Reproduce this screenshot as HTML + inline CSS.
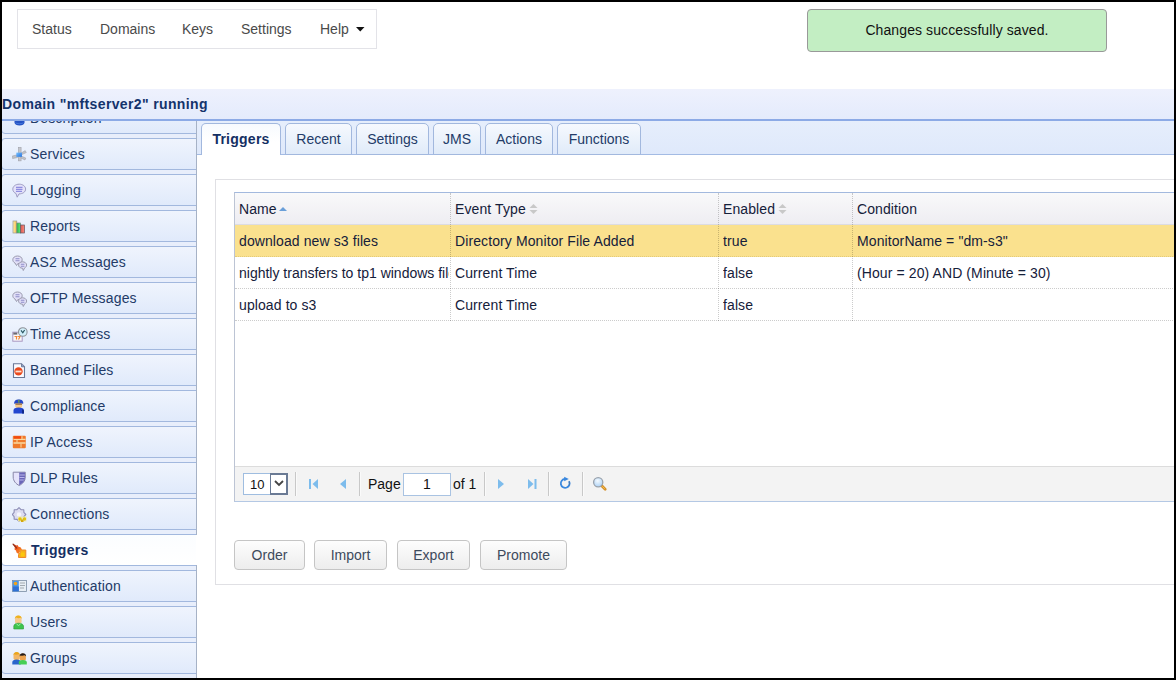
<!DOCTYPE html>
<html><head><meta charset="utf-8">
<style>
*{box-sizing:border-box;margin:0;padding:0}
html,body{width:1176px;height:680px;overflow:hidden;background:#fff}
body{position:relative;font-family:"Liberation Sans",sans-serif;font-size:14px;color:#222}
.abs{position:absolute}
#frame{position:absolute;left:0;top:0;width:1176px;height:680px;border:2px solid #000;pointer-events:none;z-index:100}
/* top nav */
#nav{left:17px;top:9px;width:360px;height:40px;border:1px solid #e3e3e8;background:#fff}
#nav span{position:absolute;top:11px;color:#4a4a4a;line-height:16px}
#toast{left:807px;top:9px;width:300px;height:43px;border:1px solid #999;border-radius:4px;background:#c3eec3;color:#111;text-align:center;line-height:40px;letter-spacing:0.1px}
/* header band */
#band{left:2px;top:89px;width:1172px;height:32px;background:linear-gradient(#eef1fd,#e4ebfc);border-bottom:2px solid #8caae6}
#band b{position:absolute;left:0px;top:7px;font-size:14px;color:#14336b;line-height:16px;letter-spacing:0.36px}
/* sidebar */
#side{left:2px;top:121px;width:195px;height:557px;overflow:hidden;background:#e8eefb}
.si{position:absolute;left:-1px;width:201px;height:32px;border:1px solid #a2b8de;border-radius:4px;background:linear-gradient(#eff4fd,#e0eafb);color:#233b68}
.si span{position:absolute;left:28px;top:7px;line-height:16px;letter-spacing:0.15px}
.si svg{position:absolute;left:10px;top:8px}
.si.act{background:linear-gradient(#fbfdff,#fff);}
.si.act span{font-weight:bold;color:#142f63;letter-spacing:0.3px;left:29px}
/* main */
#main{left:196px;top:121px;width:980px;height:557px;border-left:1px solid #a6b2c6;background:#fff}
#tabbar{left:0;top:0;width:980px;height:34px;background:linear-gradient(#e6eefc,#dfe9fb);border-bottom:1px solid #a3bbe4}
.tab{position:absolute;top:2px;height:32px;border:1px solid #a2b8de;border-radius:5px 5px 0 0;background:linear-gradient(#f6f9fe,#e0ebf9);color:#233b68;text-align:center;line-height:30px}
.tab.act{background:linear-gradient(#f7fafe,#fff 60%);border-bottom:none;letter-spacing:0.25px;font-weight:bold;color:#142f63}
#box{left:215px;top:179px;width:970px;height:406px;border:1px solid #e0e0e4}
#grid{left:234px;top:192px;width:950px;height:310px;border:1px solid #b4c8e4;border-top-color:#a3b9de;border-left-color:#bcc4d4;background:#fff}
.hdr{position:absolute;left:0;top:0;width:100%;height:32px;background:linear-gradient(#f9f9fa,#eeedf2);border-bottom:1px solid #dcdce2}
.cell{position:absolute;line-height:16px;color:#15203a;letter-spacing:0.1px;white-space:nowrap;overflow:hidden}
.vline{position:absolute;top:0;width:0;border-left:1px dotted rgba(0,0,0,0.2)}
.hline{position:absolute;left:0;width:100%;height:0;border-top:1px dotted rgba(0,0,0,0.2)}
#pager{left:0;top:273px;width:100%;height:35px;background:#f3f3f3;border-top:1px solid #dcdcdc}
.sep{position:absolute;top:5px;width:2px;height:24px;background:#c8c8c8;border-right:1px solid #fafafa}
.btn{position:absolute;top:540px;height:30px;border:1px solid #c5c5c5;border-radius:4px;background:linear-gradient(#fdfdfd,#ededed);color:#3d4a5c;text-align:center;line-height:28px}
</style></head><body>
<div id="frame"></div>

<div id="nav" class="abs">
  <span style="left:14px">Status</span>
  <span style="left:82px">Domains</span>
  <span style="left:164px">Keys</span>
  <span style="left:223px">Settings</span>
  <span style="left:302px">Help</span>
  <svg class="abs" style="left:338px;top:17px" width="9" height="5"><path d="M0 0H8.5L4.25 4.5Z" fill="#111"/></svg>
</div>

<div id="toast" class="abs">Changes successfully saved.</div>

<div id="band" class="abs"><b>Domain "mftserver2" running</b></div>

<div id="side" class="abs">
  <div class="si" style="top:-19px"><svg width="16" height="16"><path d="M2.5 2V11.5C2.5 13.5 4.8 14.5 7.5 14.5C10.2 14.5 12.5 13.5 12.5 11.5V2Z" fill="#2553c4"/><path d="M3.5 11.8C4.5 13 10.5 13 11.5 11.8" stroke="#4a7ee0" stroke-width="0.8" fill="none"/></svg><span>Description</span></div>
  <div class="si" style="top:17px"><svg width="16" height="16"><rect x="6.3" y="0.3" width="2.8" height="13.6" fill="#c4c6cc" stroke="#9a9ca4" stroke-width="0.5"/><path d="M0.3 9L5.5 7.8V10.5L0.6 11.6Z" fill="#bfc1c7" stroke="#9a9ca4" stroke-width="0.5"/><path d="M9.5 5.8L13.2 3.6L14.3 5.6L9.8 7.6Z" fill="#bfc1c7" stroke="#9a9ca4" stroke-width="0.5"/><path d="M9.2 9L13.8 11L13 13L8.8 11Z" fill="#bfc1c7" stroke="#9a9ca4" stroke-width="0.5"/><defs><linearGradient id="sg" x1="0" y1="0" x2="1" y2="1"><stop offset="0" stop-color="#7cc4ff"/><stop offset="1" stop-color="#1f70e0"/></linearGradient></defs><rect x="4.3" y="5.6" width="5.6" height="4.2" fill="url(#sg)"/></svg><span>Services</span></div>
  <div class="si" style="top:53px"><svg width="16" height="16"><path d="M7.2 1.2C3.6 1.2 0.8 3.3 0.8 6.2C0.8 8.2 2.2 9.8 4 10.5L5.2 14.2L7 10.9C10.8 10.9 13.6 8.9 13.6 6.1C13.6 3.3 10.8 1.2 7.2 1.2Z" fill="#e4e2fa" stroke="#9d9cc2" stroke-width="1"/><path d="M4 4.3H10.5M4 6.3H10.5M4 8.3H10" stroke="#8f8de0" stroke-width="1.2"/></svg><span>Logging</span></div>
  <div class="si" style="top:89px"><svg width="16" height="16"><defs><linearGradient id="rg" x1="0" y1="0" x2="1" y2="0"><stop offset="0" stop-color="#fff0b0"/><stop offset="1" stop-color="#f2b840"/></linearGradient><linearGradient id="gg" x1="0" y1="0" x2="1" y2="0"><stop offset="0" stop-color="#2fb04a"/><stop offset="1" stop-color="#5ef07a"/></linearGradient><linearGradient id="rdg" x1="0" y1="0" x2="1" y2="0"><stop offset="0" stop-color="#d85a50"/><stop offset="1" stop-color="#ff8a80"/></linearGradient></defs><rect x="1" y="2" width="3.8" height="12" fill="url(#rg)" stroke="#9a9a90" stroke-width="0.7"/><rect x="4.8" y="4" width="3.8" height="10" fill="url(#gg)" stroke="#7a8a80" stroke-width="0.7"/><rect x="8.6" y="6" width="4" height="8" fill="url(#rdg)" stroke="#5a5a66" stroke-width="0.7"/></svg><span>Reports</span></div>
  <div class="si" style="top:125px"><svg width="16" height="16"><path d="M5.5 1C2.8 1 0.8 2.6 0.8 4.8C0.8 6.2 1.7 7.4 3 8L4.5 10.5L5.8 8.6C8.4 8.5 10.2 6.9 10.2 4.8C10.2 2.6 8.2 1 5.5 1Z" fill="#e2e0f8" stroke="#9a9aae" stroke-width="1"/><path d="M3.5 3.8H7.5M3.5 5.8H7.5" stroke="#8e8cc8" stroke-width="1.1"/><path d="M10.5 6.8C8.2 6.8 6.6 8.2 6.6 10C6.6 11.8 8.2 13.2 10.5 13.2L11.3 15.5L12.5 13C13.8 12.4 14.6 11.3 14.6 10C14.6 8.2 12.8 6.8 10.5 6.8Z" fill="#e2e0f8" stroke="#9a9aae" stroke-width="1"/><path d="M8.8 9.3H12.4M8.8 11.2H12.4" stroke="#8e8cc8" stroke-width="1.1"/></svg><span>AS2 Messages</span></div>
  <div class="si" style="top:161px"><svg width="16" height="16"><path d="M5.5 1C2.8 1 0.8 2.6 0.8 4.8C0.8 6.2 1.7 7.4 3 8L4.5 10.5L5.8 8.6C8.4 8.5 10.2 6.9 10.2 4.8C10.2 2.6 8.2 1 5.5 1Z" fill="#e2e0f8" stroke="#9a9aae" stroke-width="1"/><path d="M3.5 3.8H7.5M3.5 5.8H7.5" stroke="#8e8cc8" stroke-width="1.1"/><path d="M10.5 6.8C8.2 6.8 6.6 8.2 6.6 10C6.6 11.8 8.2 13.2 10.5 13.2L11.3 15.5L12.5 13C13.8 12.4 14.6 11.3 14.6 10C14.6 8.2 12.8 6.8 10.5 6.8Z" fill="#e2e0f8" stroke="#9a9aae" stroke-width="1"/><path d="M8.8 9.3H12.4M8.8 11.2H12.4" stroke="#8e8cc8" stroke-width="1.1"/></svg><span>OFTP Messages</span></div>
  <div class="si" style="top:197px"><svg width="16" height="16"><rect x="0.8" y="5.2" width="9.4" height="9" fill="#fbf7fa" stroke="#a898c0" stroke-width="1"/><rect x="1.3" y="5.6" width="4" height="2" fill="#6a6a70"/><path d="M2.5 9.5H4.5V12.5M5.5 9.5H8L6.5 12.5" stroke="#f08a3a" stroke-width="1.2" fill="none"/><circle cx="10.8" cy="5" r="4.3" fill="#d2effa" stroke="#8d9298" stroke-width="1.1"/><path d="M9 3.4L10.8 5.8L12.6 3" stroke="#2a5560" stroke-width="1.2" fill="none"/></svg><span>Time Access</span></div>
  <div class="si" style="top:233px"><svg width="16" height="16"><path d="M1.5 0.8H9.5L12.5 3.8V14.5H1.5Z" fill="#fbfbff" stroke="#6a7896" stroke-width="1.1"/><path d="M9.5 0.8V3.8H12.5" fill="#8fa0c8" stroke="#6a7896" stroke-width="0.9"/><circle cx="6.5" cy="8.4" r="4.2" fill="#ea4a1e"/><rect x="3.5" y="7.6" width="6" height="1.8" fill="#fde0d0"/></svg><span>Banned Files</span></div>
  <div class="si" style="top:269px"><svg width="16" height="16"><path d="M2.2 4.8C1.8 2 3.8 0.5 6.8 0.5C9.8 0.5 11.6 2 11.2 4.8Z" fill="#2547c6"/><rect x="6" y="0.8" width="1.6" height="3" fill="#5a8a66"/><path d="M3.2 4.6H10.2V7C10.2 8.5 8.8 9.2 6.7 9.2C4.6 9.2 3.2 8.5 3.2 7Z" fill="#f5c98a"/><rect x="3.5" y="4.6" width="6.5" height="1" fill="#7a5030"/><path d="M1.5 14.5V11.5C1.5 9.5 3.5 8.6 6.7 8.6C9.9 8.6 12 9.5 12 11.5V14.5Z" fill="#2347d0"/><path d="M10 10L12 11.5V14.5H10Z" fill="#112a8a"/></svg><span>Compliance</span></div>
  <div class="si" style="top:305px"><svg width="16" height="16"><rect x="0.8" y="0.8" width="13" height="12.5" rx="1" fill="#ef7a2c"/><path d="M1.5 4.3H13.5M1.5 8H13.5" stroke="#fbd9a0" stroke-width="1.3"/><path d="M5 4.8V7.5M10 1.2V3.8M9 8.6V12.5" stroke="#fbd9a0" stroke-width="1"/><rect x="2" y="1.2" width="7" height="2.4" fill="#f24a10"/></svg><span>IP Access</span></div>
  <div class="si" style="top:341px"><svg width="16" height="16"><path d="M1.2 1.2H13.3V6C13.3 10 10.5 13 7.2 14.5C4 13 1.2 10 1.2 6Z" fill="#e5e3fb" stroke="#8987a8" stroke-width="1"/><path d="M7.2 1.5H13V6C13 9.8 10.5 12.8 7.2 14.2Z" fill="#6a66b8"/><path d="M7.5 4H12.8M7.5 6.5H12.5M7.5 9H11.8" stroke="#c2bff0" stroke-width="0.9"/></svg><span>DLP Rules</span></div>
  <div class="si" style="top:377px"><svg width="16" height="16"><path d="M13.80 7.50L11.90 9.53L11.81 12.31L9.03 12.40L7.00 14.30L4.97 12.40L2.19 12.31L2.10 9.53L0.20 7.50L2.10 5.47L2.19 2.69L4.97 2.60L7.00 0.70L9.03 2.60L11.81 2.69L11.90 5.47Z" fill="#dcdcf0" stroke="#8d8db5" stroke-width="1.1" stroke-linejoin="round"/><circle cx="7" cy="7.5" r="2.2" fill="#f4f4fc"/><rect x="6" y="9.5" width="8.5" height="5" fill="#ece6b8"/><circle cx="8" cy="12" r="1.7" fill="#e2c40e"/><circle cx="12.5" cy="12" r="1.7" fill="#e2c40e"/><rect x="9" y="12.5" width="2.5" height="2.5" fill="#d4a80e"/></svg><span>Connections</span></div>
  <div class="si act" style="top:413px"><svg width="16" height="16"><defs><linearGradient id="tg" x1="0" y1="0" x2="1" y2="1"><stop offset="0" stop-color="#c2401a"/><stop offset="0.45" stop-color="#f25c20"/><stop offset="1" stop-color="#f7931e"/></linearGradient></defs><path d="M0.5 0.5L4.5 2.5L5.5 2L6.5 3.8L8.5 4.2L10 6.5L8 8.5L6.5 11L4.5 9.5L4 7.5L2.5 6.5L2.8 4.5Z" fill="url(#tg)"/><path d="M0.8 0.8L5 5.5" stroke="#8a2a18" stroke-width="1.1"/><path d="M7 7H13.8V14.5H6.5V11.5L8.5 9Z" fill="#f6b21a" stroke="#ef8a2a" stroke-width="1"/><rect x="9" y="9.5" width="3.5" height="4" fill="#fcc80c"/></svg><span>Triggers</span></div>
  <div class="si" style="top:449px"><svg width="16" height="16"><rect x="0.5" y="1.5" width="14" height="11" fill="#e7eef5" stroke="#7b8da4" stroke-width="0.8"/><rect x="0.8" y="1.8" width="6" height="10.5" fill="#4a96e6"/><rect x="0.8" y="7.5" width="6" height="4.8" fill="#2f70d4"/><circle cx="3.5" cy="4.5" r="1.8" fill="#f2a21a"/><path d="M8 4H13M8 6.5H13M8 9H12" stroke="#9aa0a8" stroke-width="0.9"/></svg><span>Authentication</span></div>
  <div class="si" style="top:485px"><svg width="16" height="16"><path d="M3 4.5C3 1.8 4.5 0.6 6.3 0.6C8.2 0.6 9.6 1.8 9.6 4.5V7C9.6 8.3 8.2 9 6.3 9C4.4 9 3 8.3 3 7Z" fill="#f6c98c"/><path d="M2.8 4C2.8 1.5 4.4 0.5 6.3 0.5C8.3 0.5 9.8 1.5 9.8 4L8.8 2.8L6.5 3.2L4 2.6Z" fill="#eeb21e"/><path d="M1.8 14V11.2C1.8 9.2 3.8 8.2 6.5 8.2C9.2 8.2 11.5 9.2 11.5 11.2V14Z" fill="#3fc44e" stroke="#2a9a38" stroke-width="0.6"/><path d="M4.5 9L6.5 10.5L8.5 9" stroke="#9af5a6" stroke-width="1" fill="none"/></svg><span>Users</span></div>
  <div class="si" style="top:521px"><svg width="16" height="16"><path d="M1.5 5C1.5 2.5 2.8 1.2 4.6 1.2C6.4 1.2 7.8 2.5 7.8 5V7.2C7.8 8.5 6.5 9.2 4.6 9.2C2.8 9.2 1.5 8.5 1.5 7.2Z" fill="#f3b665"/><path d="M1.2 4.8C1.2 2 2.8 0.9 4.6 0.9C6.6 0.9 8 2 8 4.8L6.8 3.2L4 3.8L2 3.3Z" fill="#eaa51c"/><path d="M0.3 13.6V11C0.3 9.3 2 8.4 4.6 8.4C7.2 8.4 8.8 9.3 8.8 11V13.6Z" fill="#2a66cc"/><path d="M7.8 6C7.8 3.8 9 2.6 10.8 2.6C12.6 2.6 13.9 3.8 13.9 6V8C13.9 9.2 12.6 9.8 10.8 9.8C9 9.8 7.8 9.2 7.8 8Z" fill="#eda24e"/><path d="M7.6 5.6C7.6 3.2 9 2.2 10.8 2.2C12.8 2.2 14.1 3.2 14.1 5.6L12.8 4.3L10 4.8L8.6 4.6Z" fill="#231a18"/><path d="M6.8 13.4V11.2C6.8 9.7 8.5 9 10.8 9C13.1 9 14.8 9.7 14.8 11.2V13.4Z" fill="#46cf56"/></svg><span>Groups</span></div>
</div>

<div id="main" class="abs">
  <div id="tabbar" class="abs"></div>
  <div class="tab act" style="left:4px;width:80px">Triggers</div>
  <div class="tab" style="left:88px;width:67px">Recent</div>
  <div class="tab" style="left:159px;width:73px">Settings</div>
  <div class="tab" style="left:236px;width:48px">JMS</div>
  <div class="tab" style="left:288px;width:68px">Actions</div>
  <div class="tab" style="left:360px;width:84px">Functions</div>
</div>

<div class="abs" style="left:196px;top:535px;width:1px;height:30px;background:#fff"></div>
<div id="box" class="abs"></div>
<div id="grid" class="abs">
  <div class="hdr"></div>
  <div class="abs" style="left:0;top:32px;width:100%;height:32px;background:#fae18e"></div>
  <div class="hline" style="top:63px;border-top-color:rgba(90,70,0,0.14)"></div>
  <div class="hline" style="top:95px"></div>
  <div class="hline" style="top:127px"></div>
  <div class="vline" style="left:215px;height:128px"></div>
  <div class="vline" style="left:483px;height:128px"></div>
  <div class="vline" style="left:617px;height:128px"></div>
  <div class="cell" style="left:4px;top:8px">Name</div>
  <svg class="abs" style="left:44px;top:14px" width="8" height="4"><path d="M0 4L4 0L8 4Z" fill="#6a9fd9"/></svg>
  <div class="cell" style="left:220px;top:8px">Event Type</div>
  <svg class="abs" style="left:294px;top:10px" width="9" height="12"><path d="M0.5 5L4.5 1L8.5 5Z M0.5 7L4.5 11L8.5 7Z" fill="#c8c8c8"/></svg>
  <div class="cell" style="left:488px;top:8px">Enabled</div>
  <svg class="abs" style="left:543px;top:10px" width="9" height="12"><path d="M0.5 5L4.5 1L8.5 5Z M0.5 7L4.5 11L8.5 7Z" fill="#c8c8c8"/></svg>
  <div class="cell" style="left:622px;top:8px">Condition</div>

  <div class="cell" style="left:4px;top:40px">download new s3 files</div>
  <div class="cell" style="left:220px;top:40px">Directory Monitor File Added</div>
  <div class="cell" style="left:488px;top:40px">true</div>
  <div class="cell" style="left:622px;top:40px">MonitorName = "dm-s3"</div>

  <div class="cell" style="left:4px;top:72px;width:210px;letter-spacing:0">nightly transfers to tp1 windows file</div>
  <div class="cell" style="left:220px;top:72px">Current Time</div>
  <div class="cell" style="left:488px;top:72px">false</div>
  <div class="cell" style="left:622px;top:72px">(Hour = 20) AND (Minute = 30)</div>

  <div class="cell" style="left:4px;top:104px">upload to s3</div>
  <div class="cell" style="left:220px;top:104px">Current Time</div>
  <div class="cell" style="left:488px;top:104px">false</div>

  <div id="pager" class="abs">
    <div class="abs" style="left:8px;top:6px;width:45px;height:22px;border:1px solid #9fbde0;background:#fff"></div>
    <div class="abs" style="left:15px;top:11px;font-size:13px;line-height:14px;color:#111">10</div>
    <div class="abs" style="left:35px;top:6px;width:18px;height:22px;border:2px solid #6a7a94;border-left:1px solid #6a7a94;background:#fff"></div>
    <svg class="abs" style="left:39px;top:13px" width="10" height="7"><path d="M1 1L5 5L9 1" stroke="#444" stroke-width="1.8" fill="none"/></svg>
    <div class="sep" style="left:60px"></div>
    <svg class="abs" style="left:74px;top:12px" width="10" height="10"><rect x="0" y="0" width="2" height="10" fill="#7dbcec"/><path d="M9 0V10L3.5 5Z" fill="#7dbcec"/></svg>
    <svg class="abs" style="left:105px;top:12px" width="8" height="10"><path d="M6 0V10L0 5Z" fill="#7dbcec"/></svg>
    <div class="sep" style="left:124px"></div>
    <div class="abs" style="left:133px;top:9px;line-height:16px;color:#111">Page</div>
    <div class="abs" style="left:168px;top:6px;width:48px;height:23px;border:1px solid #a9c3e2;background:#fff;text-align:center;line-height:21px;color:#111">1</div>
    <div class="abs" style="left:218px;top:9px;line-height:16px;color:#111">of 1</div>
    <div class="sep" style="left:249px"></div>
    <svg class="abs" style="left:263px;top:12px" width="8" height="10"><path d="M0 0V10L6 5Z" fill="#7dbcec"/></svg>
    <svg class="abs" style="left:293px;top:12px" width="10" height="10"><path d="M0 0V10L5.5 5Z" fill="#7dbcec"/><rect x="6.5" y="0" width="2" height="10" fill="#7dbcec"/></svg>
    <div class="sep" style="left:313px"></div>
    <svg class="abs" style="left:324px;top:9px" width="14" height="14"><path d="M6 3A4.4 4.4 0 1 0 10 5.2" stroke="#3a88de" stroke-width="1.8" fill="none"/><path d="M10 5.2A4.4 4.4 0 0 1 10.3 9.2" stroke="#5a6a80" stroke-width="1" fill="none" opacity="0.5"/><path d="M5.2 0.8L9.8 3L5.2 5.2Z" fill="#3a88de"/></svg>
    <div class="sep" style="left:347px"></div>
    <svg class="abs" style="left:357px;top:9px" width="16" height="16"><defs><radialGradient id="lg" cx="0.45" cy="0.35" r="0.7"><stop offset="0" stop-color="#f4faff"/><stop offset="1" stop-color="#a9d0f5"/></radialGradient></defs><path d="M9.5 9.5L13.2 13.2" stroke="#d4902a" stroke-width="2.8" stroke-linecap="round"/><path d="M10.5 10.5L12.5 12.5" stroke="#f5c04a" stroke-width="1" stroke-linecap="round"/><circle cx="6.2" cy="6.2" r="4.6" fill="url(#lg)" stroke="#9aa2ac" stroke-width="1.3"/></svg>
  </div>
</div>

<div class="btn" style="left:234px;width:71px">Order</div>
<div class="btn" style="left:314px;width:73px">Import</div>
<div class="btn" style="left:397px;width:73px">Export</div>
<div class="btn" style="left:480px;width:87px">Promote</div>

</body></html>
